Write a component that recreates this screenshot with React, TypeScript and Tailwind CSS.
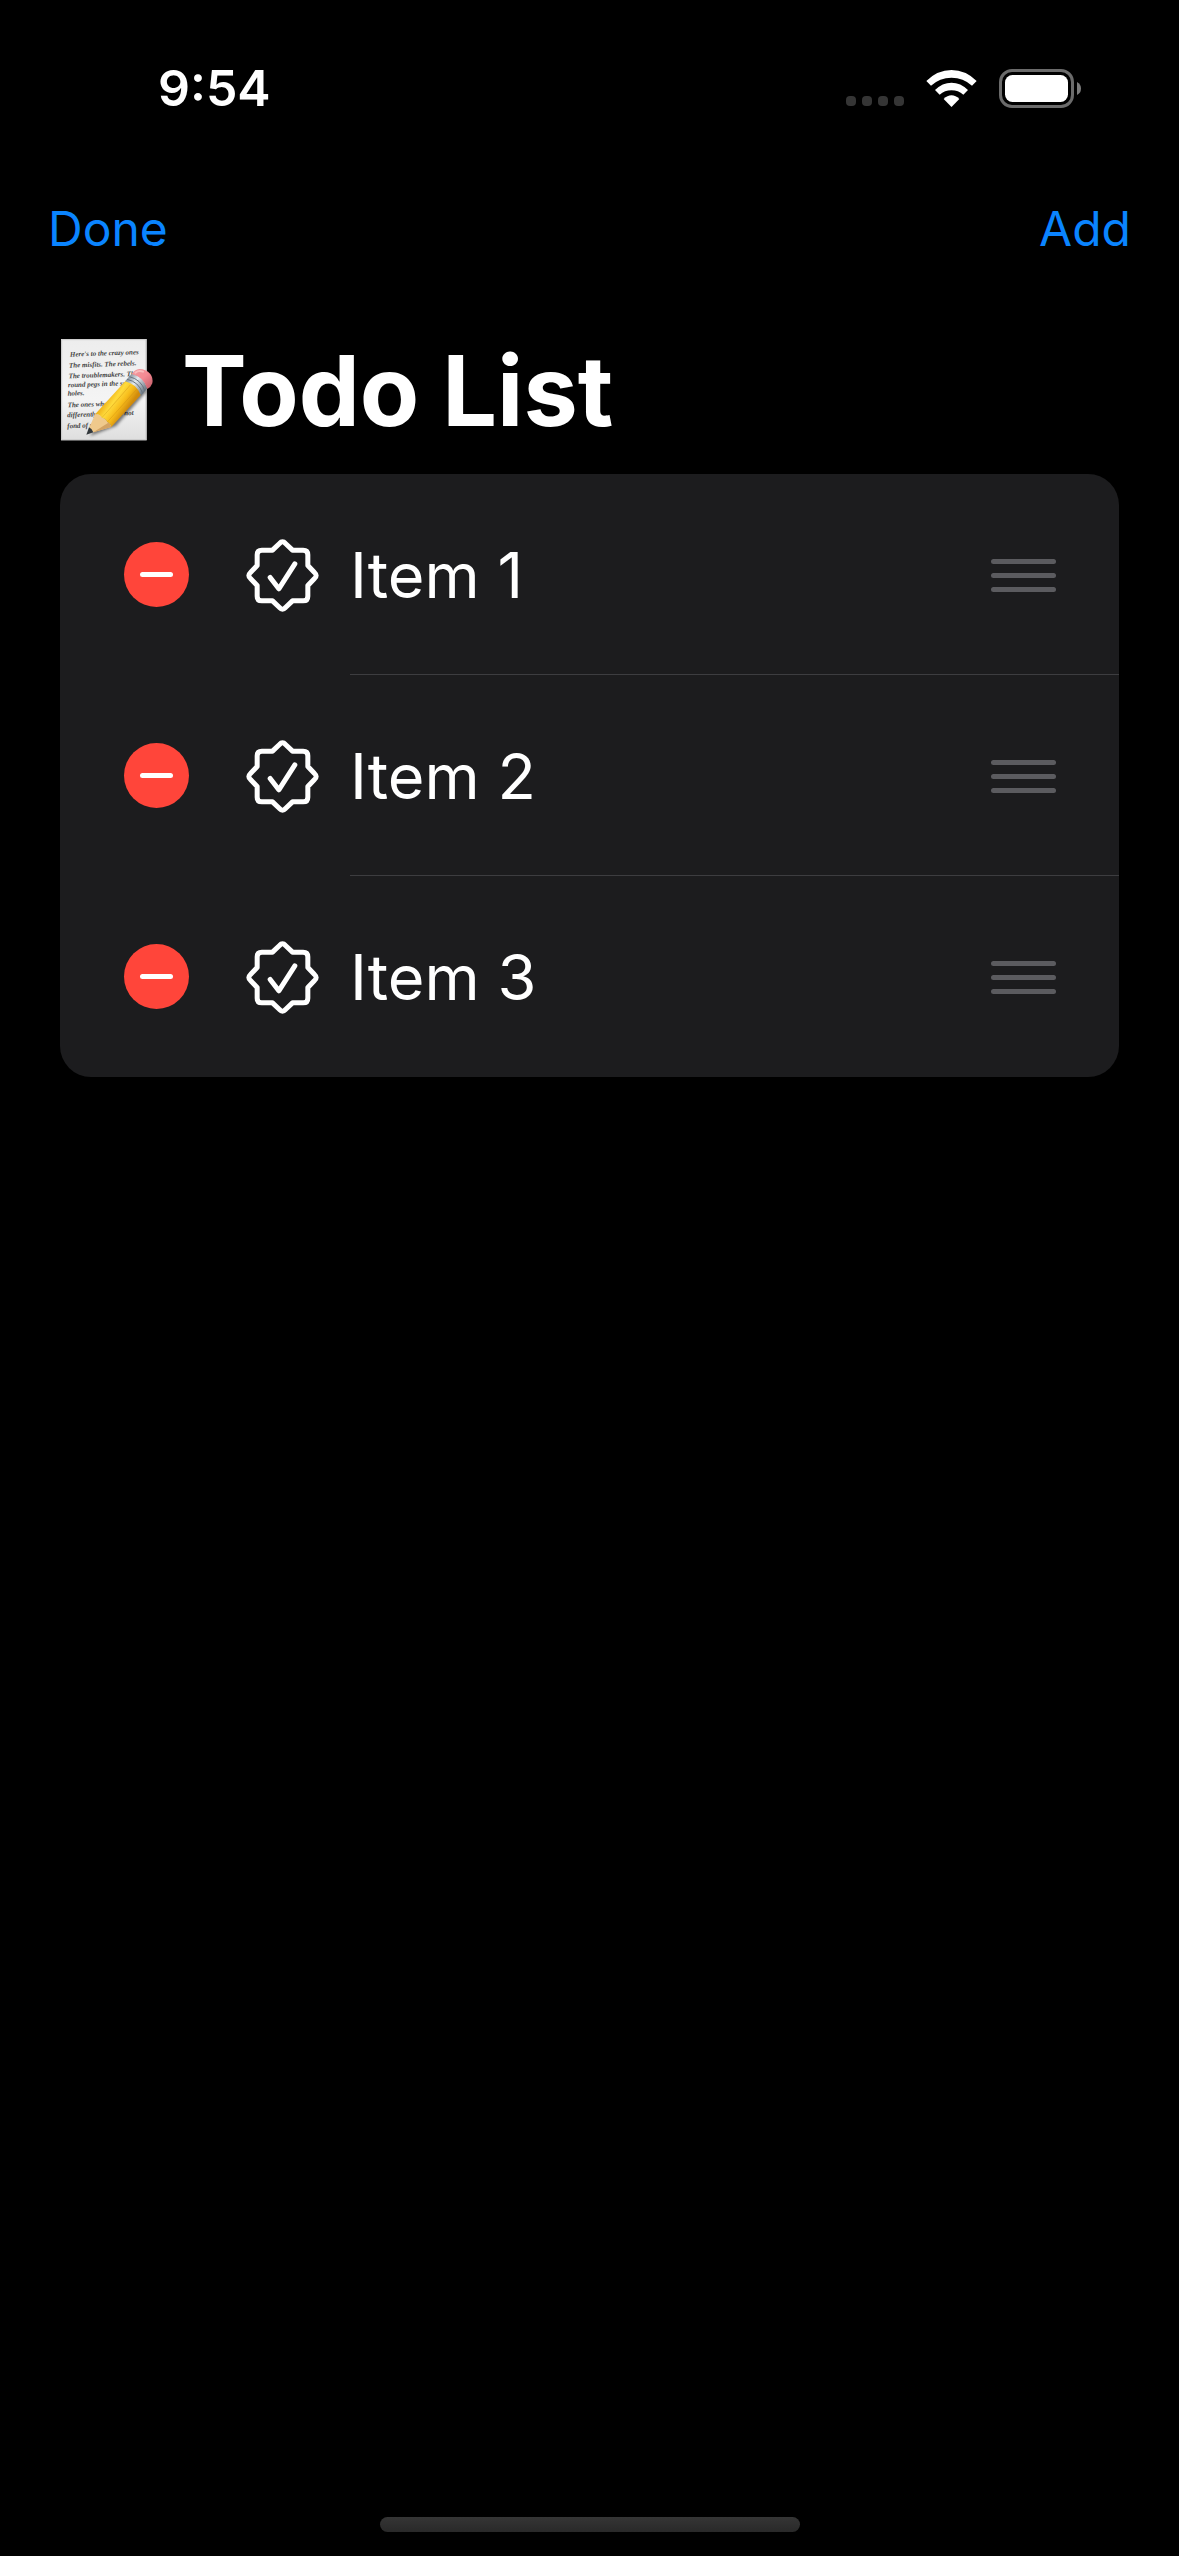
import { useState } from "react";

const items = ["Item 1", "Item 2", "Item 3"];

const noteLines = [
  { x: 90, y: 110, text: "Here's to the crazy ones" },
  { x: 87, y: 143, text: "The misfits. The rebels." },
  { x: 86, y: 175, text: "The troublemakers. The" },
  { x: 84, y: 202, text: "round pegs in the square" },
  { x: 83, y: 227, text: "holes." },
  { x: 83, y: 262, text: "The ones who see" },
  { x: 82, y: 292, text: "differently. They're not" },
  { x: 82, y: 325, text: "fond of rules" },
];

function MemoIcon() {
  return (
    <svg className="h-[104px] w-[94px] shrink-0" viewBox="60 54 282 312" aria-hidden="true">
      <defs>
        <linearGradient id="paper" x1="0" y1="0" x2="0" y2="1">
          <stop offset="0" stopColor="#ededed" />
          <stop offset="0.6" stopColor="#f4f4f4" />
          <stop offset="1" stopColor="#dedede" />
        </linearGradient>
        <linearGradient id="body" gradientUnits="userSpaceOnUse" x1="207" y1="230" x2="262" y2="268">
          <stop offset="0" stopColor="#f0b51c" />
          <stop offset="0.3" stopColor="#ffdb3c" />
          <stop offset="0.65" stopColor="#f7bc1b" />
          <stop offset="1" stopColor="#d08a0c" />
        </linearGradient>
        <linearGradient id="ferrule" gradientUnits="userSpaceOnUse" x1="262" y1="180" x2="312" y2="218">
          <stop offset="0" stopColor="#8f9ba6" />
          <stop offset="0.35" stopColor="#e4ebf0" />
          <stop offset="1" stopColor="#66727e" />
        </linearGradient>
        <linearGradient id="eraser" gradientUnits="userSpaceOnUse" x1="285" y1="150" x2="332" y2="200">
          <stop offset="0" stopColor="#f0989c" />
          <stop offset="0.5" stopColor="#f58a93" />
          <stop offset="1" stopColor="#c9626d" />
        </linearGradient>
        <clipPath id="sheet">
          <rect x="63" y="57" width="257" height="304" />
        </clipPath>
        <filter id="soft" x="-20%" y="-20%" width="140%" height="140%">
          <feGaussianBlur stdDeviation="5" />
        </filter>
      </defs>
      <rect x="63" y="57" width="257" height="304" fill="url(#paper)" />
      <rect x="65" y="59" width="253" height="300" fill="none" stroke="#c9c9c9" strokeWidth="3" />
      <g fontFamily="'Liberation Serif', serif" fontStyle="italic" fontSize="21" fill="#444">
        {noteLines.map((l) => (
          <text key={l.y} x={l.x} y={l.y} transform={`rotate(-2 ${l.x} ${l.y})`}>
            {l.text}
          </text>
        ))}
      </g>
      <g clipPath="url(#sheet)">
        <path d="M150 348 L228 318 L322 212 L300 200 L190 290Z" fill="#000" opacity="0.5" filter="url(#soft)" />
      </g>
      <path d="M147 324 L166 282 Q180 283 186 293 Q199 295 202 306 Q212 309 214 321 L160 337 Q150 334 147 324Z" fill="#efc98c" />
      <path d="M160 337 L214 321 Q212 312 205 308Z" fill="#d3a364" />
      <path d="M139 344 L147 322 Q155 325 160 337Z" fill="#33383c" />
      <path d="M166 282 L257 182 Q292 190 303 224 L214 321 Q212 310 202 306 Q198 295 186 293 Q180 283 166 282Z" fill="url(#body)" />
      <path d="M186 293 L271 195 M202 306 L290 208" stroke="#c8880d" strokeWidth="2" opacity="0.55" fill="none" />
      <path d="M255 184 L275 161 Q310 168 322 205 L303 227 Q291 192 255 184Z" fill="url(#ferrule)" />
      <path d="M261 178 Q296 185 308 220 M268 170 Q303 178 315 213" stroke="#697580" strokeWidth="3" fill="none" />
      <path d="M275 162 Q284 148 298 147 Q318 147 331 162 Q340 174 337 190 Q333 202 322 207 Q311 170 275 162Z" fill="url(#eraser)" />
      <path d="M286 158 Q296 150 309 155" stroke="#f9bcbd" strokeWidth="6" strokeLinecap="round" fill="none" />
    </svg>
  );
}

function SealIcon() {
  return (
    <svg className="size-[73px] shrink-0" viewBox="-109.5 -109.5 219 219" fill="none" stroke="#fff" strokeWidth="15" strokeLinecap="round" strokeLinejoin="round" aria-hidden="true">
      <path d="M-30 -76 L-9 -96 Q0 -106 9 -96 L30 -76 H62 Q76 -76 76 -62 V-30 L96 -9 Q106 0 96 9 L76 30 V62 Q76 76 62 76 H30 L9 96 Q0 106 -9 96 L-30 76 H-62 Q-76 76 -76 62 V30 L-96 9 Q-106 0 -96 -9 L-76 -30 V-62 Q-76 -76 -62 -76Z" />
      <path d="M-37 6 L-11 40 L37 -35" />
    </svg>
  );
}

function StatusIcons() {
  return (
    <div className="flex items-center" aria-hidden="true">
      <div className="mt-[26px] flex gap-[6px]">
        <i className="size-[10px] rounded-[4px] bg-[#353535]" />
        <i className="size-[10px] rounded-[4px] bg-[#353535]" />
        <i className="size-[10px] rounded-[4px] bg-[#353535]" />
        <i className="size-[10px] rounded-[4px] bg-[#353535]" />
      </div>
      <svg className="ml-[22px] h-[37px] w-[51px]" viewBox="288 57 153 111" fill="#fff">
        <path d="M289 90 Q322 57 364.5 57 Q407 57 440 90 L426 104 Q400 80 364.5 80 Q329 80 303 104Z" />
        <path d="M315 117 Q337 95 364.5 95 Q392 95 414 117 L400 131 Q385 118 364.5 118 Q344 118 329 131Z" />
        <path d="M341 144 Q352 133 364.5 133 Q377 133 388 144 L364.5 168Z" />
      </svg>
      <svg className="ml-[22px] h-[39px] w-[82px]" viewBox="0 0 82 39">
        <rect x="1.5" y="1.5" width="72" height="36" rx="11.5" fill="none" stroke="#6b6b6b" strokeWidth="3" />
        <rect x="6" y="6" width="63" height="27" rx="7.5" fill="#fff" />
        <path d="M78 13 Q82 15 82 19.5 Q82 24 78 26Z" fill="#7b7b7b" />
      </svg>
    </div>
  );
}

export default function App() {
  const [rows, setRows] = useState(items);
  return (
    <div className="flex min-h-screen flex-col bg-black font-['Inter',sans-serif] text-white">
      <header className="flex h-44 items-center justify-between pr-[98px] pl-[158px]">
        <time className="text-[50px] leading-none font-semibold">9:54</time>
        <StatusIcons />
      </header>
      <nav className="flex h-[104px] items-center justify-between px-12 pt-0.5 text-[48px] text-[#0a84ff]">
        <button type="button">Done</button>
        <button type="button" onClick={() => setRows([...rows, `Item ${rows.length + 1}`])}>Add</button>
      </nav>
      <main className="px-[60px] pt-[60px]">
        <h1 className="mb-[34px] flex h-[100px] items-center gap-7 text-[97px] leading-none font-bold">
          <MemoIcon />
          Todo List
        </h1>
        <ul className="overflow-hidden rounded-[31px] bg-[#1c1c1e]">
          {rows.map((name, i) => (
            <li key={name} className="flex h-[201px] items-center pl-16">
              <button
                type="button"
                aria-label={`Delete ${name}`}
                className="flex size-[65px] shrink-0 items-center justify-center rounded-full bg-[#ff453a]"
                onClick={() => setRows(rows.filter((r) => r !== name))}
              >
                <span className="h-[5px] w-[33px] rounded-full bg-white" />
              </button>
              <div className="ml-[57px] pt-0.5">
                <SealIcon />
              </div>
              <div
                className={
                  i < rows.length - 1
                    ? "ml-[31px] flex h-full grow items-center justify-between border-b border-[#3d3d40] pt-[3px] pr-[63px]"
                    : "ml-[31px] flex h-full grow items-center justify-between pt-0.5 pr-[63px]"
                }
              >
                <span className="text-[63px]">{name}</span>
                <button type="button" aria-label={`Reorder ${name}`} className="flex w-[65px] flex-col gap-[9px]">
                  <span className="h-[5px] rounded-full bg-[#5b5b5f]" />
                  <span className="h-[5px] rounded-full bg-[#5b5b5f]" />
                  <span className="h-[5px] rounded-full bg-[#5b5b5f]" />
                </button>
              </div>
            </li>
          ))}
        </ul>
      </main>
      <div className="mx-auto mt-auto mb-6 h-[15px] w-[420px] rounded-full bg-linear-to-b from-[#353535] to-[#292929]" />
    </div>
  );
}
